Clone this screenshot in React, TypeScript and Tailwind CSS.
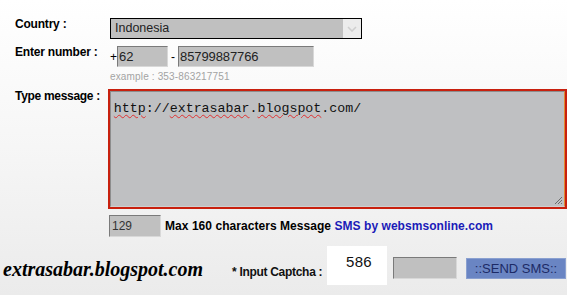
import React from "react";

const inset =
  "border border-t-[#7a7a7a] border-l-[#7a7a7a] border-b-[#d8d8d8] border-r-[#d8d8d8] bg-[#c0c0c0]";

const squiggle =
  "underline decoration-wavy decoration-[#e03030] decoration-[1px] underline-offset-[2px]";

const App: React.FC = () => {
  return (
    <div className="w-[567px] h-[295px] overflow-hidden bg-gradient-to-b from-white via-[#f6f6f6] to-[#ebebeb] font-['Liberation_Sans',Arial,sans-serif] text-black">
      <div className="pl-[15px] pt-[18px]">
        {/* country */}
        <div className="flex h-[21px]">
          <div className="w-[95px] text-[12px] font-bold leading-[13px] tracking-[-0.2px]">Country :</div>
          <div className="flex w-[252px] h-[21px] border border-black bg-[#c0c0c0]">
            <div className="flex-1 pl-[4px] text-[12.5px] leading-[19px] text-[#222]">Indonesia</div>
            <div className="w-[18px] flex items-center justify-center bg-[#ececec]">
              <svg width="10" height="6" viewBox="0 0 10 6">
                <path d="M1 1 L5 5 L9 1" fill="none" stroke="#cfcfcf" strokeWidth="1.6" />
              </svg>
            </div>
          </div>
        </div>

        {/* number */}
        <div className="flex mt-[7px]">
          <div className="w-[95px] text-[12px] font-bold leading-[13px] tracking-[-0.2px]">Enter number :</div>
          <div className="flex items-center h-[21px] text-[12px]">
            <span className="w-[7px]">+</span>
            <div className={`w-[51px] h-[21px] ${inset} pl-[1px] text-[13px] leading-[19px] text-[#222]`}>62</div>
            <span className="w-[10px] pl-[3px]">-</span>
            <div className={`w-[136px] h-[21px] ${inset} pl-[1px] text-[13px] leading-[19px] text-[#222] tracking-[-0.1px]`}>85799887766</div>
          </div>
        </div>
        <div className="ml-[95px] mt-[4px] text-[10px] leading-[12px] text-[#a3a3a3] tracking-[0.15px]">
          example : 353-863217751
        </div>

        {/* message */}
        <div className="flex mt-[6px]">
          <div className="w-[93px] pt-[1px] text-[12px] font-bold leading-[13px] tracking-[-0.3px]">Type message :</div>
          <div className="relative w-[460px] h-[120px] border-2 border-[#c8200e] bg-[#bfc0c2]">
            <div className="h-full border border-t-[#8d8d8d] border-l-[#8d8d8d] border-b-[#cfcfcf] border-r-[#e08a30] pl-[3px] pt-[3px]">
              <span className="font-['Liberation_Mono','Courier_New',monospace] text-[13.3px] leading-[15px] text-[#111]">
                <span className={squiggle}>http</span>://<span className={squiggle}>extrasabar</span>.
                <span className={squiggle}>blogspot</span>.com/
              </span>
            </div>
            <svg className="absolute right-[2px] bottom-[2px]" width="10" height="10" viewBox="0 0 10 10">
              <path d="M9 2 L2 9 M9 5 L5 9 M9 8 L8 9" stroke="#6a6a6a" strokeWidth="1" />
            </svg>
          </div>
        </div>

        {/* counter */}
        <div className="flex items-center mt-[6px] ml-[94px]">
          <div className={`w-[52px] h-[22px] ${inset} pl-[2px] text-[12px] leading-[20px] text-[#333]`}>129</div>
          <div className="ml-[4px] text-[12px] font-bold tracking-[0.05px]">
            Max 160 characters Message <span className="text-[#1b1bb8]">SMS by websmsonline.com</span>
          </div>
        </div>
      </div>

      {/* bottom */}
      <div className="flex items-start mt-[9px] pl-[3px]">
        <div className="mt-[12px] w-[229px] font-['Liberation_Serif',serif] italic font-bold text-[20px] leading-[22px] tracking-[0px]">
          extrasabar.blogspot.com
        </div>
        <div className="mt-[17px] w-[95px] text-[12px] font-bold tracking-[-0.3px] text-[#111]">* Input Captcha :</div>
        <div className="w-[60px] h-[39px] bg-white pt-[8px] pl-[19px] text-[15px] leading-[16px] text-[#111] tracking-[0.3px]">
          586
        </div>
        <div className={`ml-[6px] mt-[11px] w-[64px] h-[22px] ${inset}`} />
        <div className="ml-[9px] mt-[12px] w-[100px] h-[21px] bg-[#6a85c3] border border-[#8aa0d0] text-center text-[13px] leading-[19px] text-[#1c2a66]">
          ::SEND SMS::
        </div>
      </div>
    </div>
  );
};

export default App;
